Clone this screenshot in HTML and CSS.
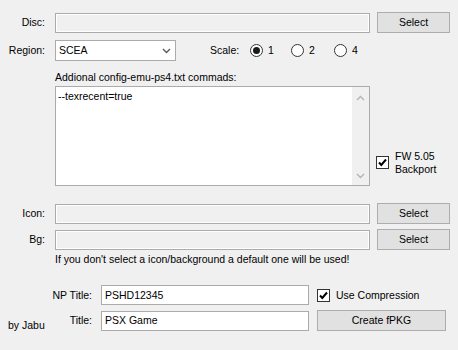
FILE: index.html
```html
<!DOCTYPE html>
<html>
<head>
<meta charset="utf-8">
<link rel="stylesheet" href="styles.css">
</head>
<body>
<div class="form">
  <div class="row r-disc">
    <span class="lbl">Disc:</span>
    <div class="tb ro w-main"></div>
    <div class="btn b-sel">Select</div>
  </div>

  <div class="row r-region">
    <span class="lbl">Region:</span>
    <div class="combo"><span>SCEA</span>
      <svg class="chev" width="9" height="6" viewBox="0 0 9 6"><path d="M1 1 L4.5 4.5 L8 1" fill="none" stroke="#5a5a5a" stroke-width="1.4"/></svg>
    </div>
    <span class="scale-lbl">Scale:</span>
    <span class="radio on"></span><span class="rtxt r1">1</span>
    <span class="radio"></span><span class="rtxt r2">2</span>
    <span class="radio"></span><span class="rtxt">4</span>
  </div>

  <div class="cfg-label">Addional config-emu-ps4.txt commads:</div>
  <div class="row r-cfg">
    <div class="ta">
      <div class="ta-text">--texrecent=true</div>
      <div class="sb">
        <svg width="9" height="6" viewBox="0 0 9 6"><path d="M1 5 L4.5 1.5 L8 5" fill="none" stroke="#b4b4b4" stroke-width="1.4"/></svg>
        <svg width="9" height="6" viewBox="0 0 9 6"><path d="M1 1 L4.5 4.5 L8 1" fill="none" stroke="#b4b4b4" stroke-width="1.4"/></svg>
      </div>
    </div>
    <div class="chk-wrap fw">
      <span class="chk"><svg width="11" height="11" viewBox="0 0 11 11"><path d="M2 5.5 L4.3 8 L9 2.5" fill="none" stroke="#000" stroke-width="2"/></svg></span>
      <span class="chk-txt">FW 5.05<br>Backport</span>
    </div>
  </div>

  <div class="row r-icon">
    <span class="lbl">Icon:</span>
    <div class="tb ro w-main"></div>
    <div class="btn b-sel">Select</div>
  </div>
  <div class="row r-bg">
    <span class="lbl">Bg:</span>
    <div class="tb ro w-main"></div>
    <div class="btn b-sel">Select</div>
  </div>
  <div class="note">If you don't select a icon/background a default one will be used!</div>

  <div class="row r-np">
    <div class="lbl2"><span class="lbl2-txt">NP Title:</span></div>
    <div class="tb w-small"><span>PSHD12345</span></div>
    <div class="chk-wrap comp">
      <span class="chk"><svg width="11" height="11" viewBox="0 0 11 11"><path d="M2 5.5 L4.3 8 L9 2.5" fill="none" stroke="#000" stroke-width="2"/></svg></span>
      <span class="chk-txt">Use Compression</span>
    </div>
  </div>
  <div class="row r-title">
    <div class="lbl2"><span class="by">by Jabu</span><span class="lbl2-txt">Title:</span></div>
    <div class="tb w-small"><span>PSX Game</span></div>
    <div class="btn b-create">Create fPKG</div>
  </div>
</div>
</body>
</html>
```

FILE: styles.css
```css
html, body {
  margin: 0;
  padding: 0;
  background: #f0f0f0;
}
body {
  width: 458px;
  height: 350px;
  overflow: hidden;
  font-family: "Liberation Sans", Arial, sans-serif;
  font-size: 10.5px;
  line-height: 13px;
  color: #000;
}
.form {
  display: flex;
  flex-direction: column;
  padding-top: 12px;
}
.row {
  display: flex;
  align-items: center;
}
.lbl {
  width: 45px;
  text-align: right;
  margin-right: 10px;
  flex: none;
}
.tb {
  box-sizing: border-box;
  height: 20px;
  border: 1px solid #ababab;
  background: #fff;
  display: flex;
  align-items: center;
  padding-left: 3px;
  flex: none;
}
.tb.ro {
  background: #f0f0f0;
  box-shadow: inset 0 0 0 1px #fff;
}
.w-main { width: 315px; }
.w-small { width: 208px; }
.btn {
  box-sizing: border-box;
  height: 21px;
  border: 1px solid #adadad;
  background: #e1e1e1;
  display: flex;
  align-items: center;
  justify-content: center;
  flex: none;
}
.b-sel {
  width: 73px;
  margin-left: 7px;
}
.r-disc { height: 21px; }
.r-disc .tb { margin-top: 1px; }
.r-region {
  margin-top: 7px;
  height: 21px;
}
.combo {
  box-sizing: border-box;
  width: 121px;
  height: 21px;
  border: 1px solid #ababab;
  background: #fff;
  display: flex;
  align-items: center;
  justify-content: space-between;
  padding: 0 4px 0 3px;
  flex: none;
}
.chev { margin-top: 1px; }
.scale-lbl {
  margin-left: 34px;
  width: 40px;
  flex: none;
}
.radio {
  box-sizing: border-box;
  width: 13px;
  height: 13px;
  border: 1px solid #333;
  border-radius: 50%;
  background: #fff;
  display: flex;
  align-items: center;
  justify-content: center;
  flex: none;
}
.radio.on::after {
  content: "";
  width: 7px;
  height: 7px;
  border-radius: 50%;
  background: #1a1a1a;
}
.rtxt { margin-left: 5px; flex: none; }
.r1 { width: 23px; }
.r2 { width: 25px; }
.cfg-label {
  margin-top: 10px;
  padding-left: 55px;
}
.r-cfg {
  margin-top: 2px;
  align-items: flex-end;
}
.ta {
  box-sizing: border-box;
  margin-left: 55px;
  width: 315px;
  height: 100px;
  border: 1px solid #ababab;
  background: #fff;
  display: flex;
  justify-content: space-between;
}
.ta-text {
  padding: 3px 0 0 2px;
}
.sb {
  width: 17px;
  background: #f0f0f0;
  display: flex;
  flex-direction: column;
  justify-content: space-between;
  align-items: center;
  padding: 8px 0 6px;
}
.chk-wrap {
  display: flex;
  align-items: center;
}
.chk {
  box-sizing: border-box;
  width: 13px;
  height: 13px;
  border: 1px solid #333;
  background: #fff;
  display: flex;
  align-items: center;
  justify-content: center;
  flex: none;
}
.chk-txt { margin-left: 6px; }
.fw {
  margin-left: 6px;
  margin-bottom: 10px;
}
.fw .chk-txt { margin-top: 1px; }
.r-icon {
  margin-top: 17px;
  height: 21px;
}
.r-bg {
  margin-top: 5px;
  height: 21px;
}
.r-icon .tb, .r-bg .tb { margin-top: 1px; }
.note {
  margin-top: 3px;
  padding-left: 55px;
}
.r-np {
  margin-top: 19px;
  height: 20px;
}
.r-title {
  margin-top: 5px;
  height: 21px;
}
.lbl2 {
  width: 92px;
  margin-right: 9px;
  display: flex;
  justify-content: space-between;
  align-items: center;
  flex: none;
}
.lbl2-txt { margin-left: auto; }
.by {
  margin-left: 8px;
  margin-top: 9px;
}
.comp { margin-left: 8px; }
.b-create {
  width: 129px;
  margin-left: 8px;
}
```
